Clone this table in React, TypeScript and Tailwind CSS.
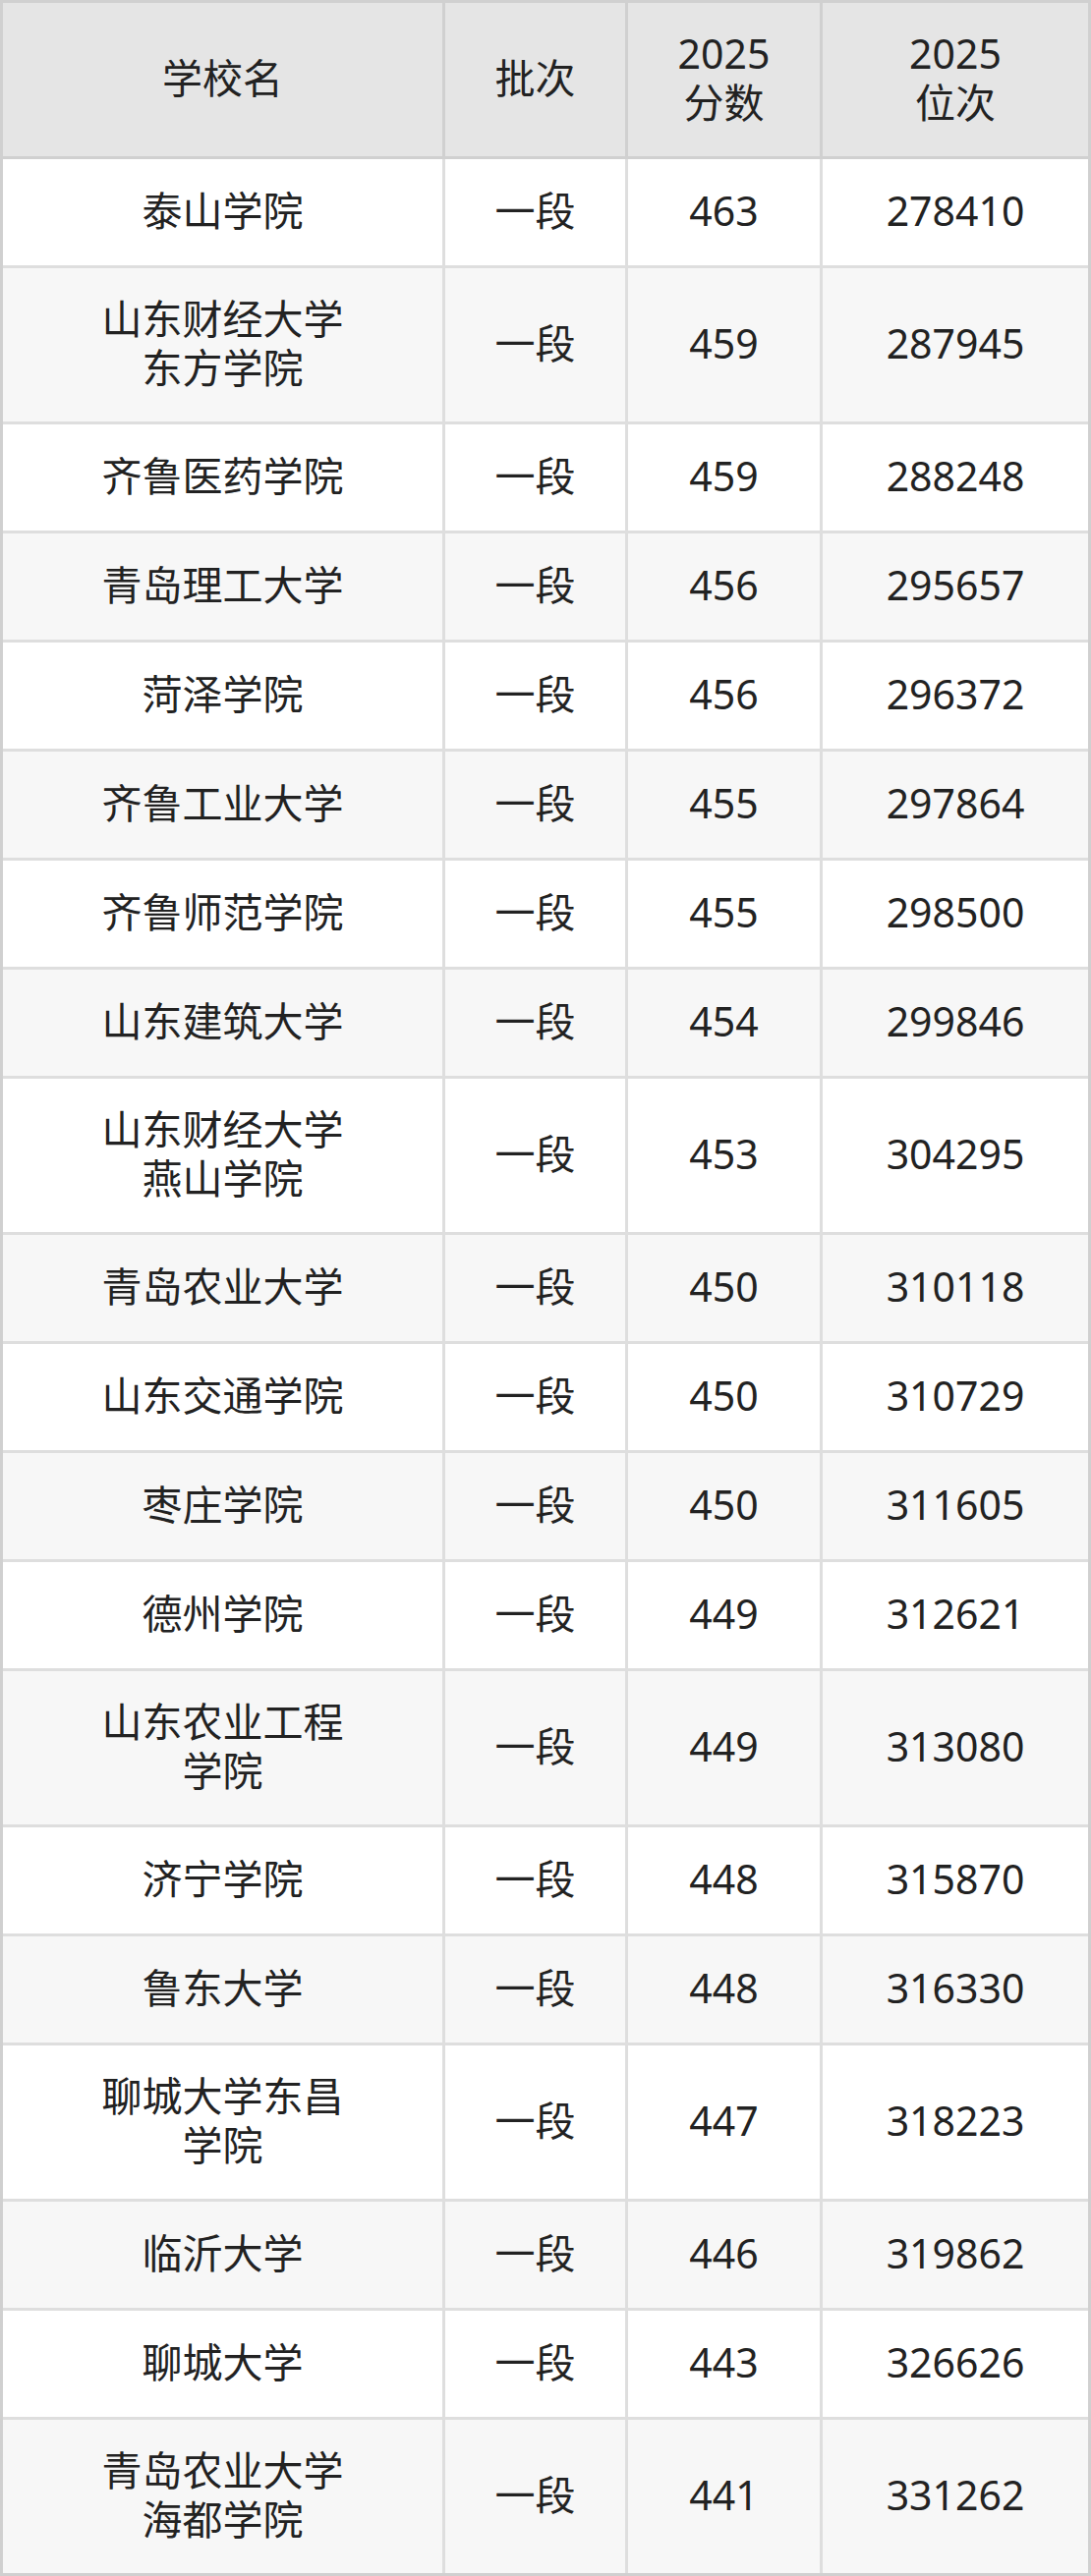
import React from "react";

interface Row {
  name: string[];
  batch: string;
  score: number;
  rank: number;
}

const rows: Row[] = [
  { name: ["泰山学院"], batch: "一段", score: 463, rank: 278410 },
  { name: ["山东财经大学", "东方学院"], batch: "一段", score: 459, rank: 287945 },
  { name: ["齐鲁医药学院"], batch: "一段", score: 459, rank: 288248 },
  { name: ["青岛理工大学"], batch: "一段", score: 456, rank: 295657 },
  { name: ["菏泽学院"], batch: "一段", score: 456, rank: 296372 },
  { name: ["齐鲁工业大学"], batch: "一段", score: 455, rank: 297864 },
  { name: ["齐鲁师范学院"], batch: "一段", score: 455, rank: 298500 },
  { name: ["山东建筑大学"], batch: "一段", score: 454, rank: 299846 },
  { name: ["山东财经大学", "燕山学院"], batch: "一段", score: 453, rank: 304295 },
  { name: ["青岛农业大学"], batch: "一段", score: 450, rank: 310118 },
  { name: ["山东交通学院"], batch: "一段", score: 450, rank: 310729 },
  { name: ["枣庄学院"], batch: "一段", score: 450, rank: 311605 },
  { name: ["德州学院"], batch: "一段", score: 449, rank: 312621 },
  { name: ["山东农业工程", "学院"], batch: "一段", score: 449, rank: 313080 },
  { name: ["济宁学院"], batch: "一段", score: 448, rank: 315870 },
  { name: ["鲁东大学"], batch: "一段", score: 448, rank: 316330 },
  { name: ["聊城大学东昌", "学院"], batch: "一段", score: 447, rank: 318223 },
  { name: ["临沂大学"], batch: "一段", score: 446, rank: 319862 },
  { name: ["聊城大学"], batch: "一段", score: 443, rank: 326626 },
  { name: ["青岛农业大学", "海都学院"], batch: "一段", score: 441, rank: 331262 },
];

const App = () => {
  return (
    <div
      className="w-[1110px] bg-white text-[#222222]"
      style={{ fontFamily: '"Noto Sans", "Noto Sans CJK SC", sans-serif' }}
    >
      <table className="w-full border-separate border-spacing-0 border-[3px] border-[#d0d0d0] text-[41px] leading-[50px] text-center table-fixed">
        <colgroup>
          <col className="w-[450px]" />
          <col className="w-[186px]" />
          <col className="w-[198px]" />
          <col />
        </colgroup>
        {/* Header */}
        <thead>
          <tr className="bg-[#e5e5e5]">
            <th className="h-[159px] font-normal border-r-[3px] border-b-[3px] border-[#d0d0d0] pt-[26px] pb-[30px]">
              学校名
            </th>
            <th className="font-normal border-r-[3px] border-b-[3px] border-[#d0d0d0] pt-[26px] pb-[30px]">
              批次
            </th>
            <th className="font-normal border-r-[3px] border-b-[3px] border-[#d0d0d0] pt-[26px] pb-[30px]">
              2025
              <br />
              分数
            </th>
            <th className="font-normal border-b-[3px] border-[#d0d0d0] pt-[26px] pb-[30px]">
              2025
              <br />
              位次
            </th>
          </tr>
        </thead>
        <tbody>
          {rows.map((row, i) => {
            const last = i === rows.length - 1;
            const bg = i % 2 === 0 ? "bg-white" : "bg-[#f7f7f7]";
            const bottom = last ? "" : "border-b-[3px]";
            // two-line rows get slightly less padding
            const pad = row.name.length > 1 ? "pt-[26px] pb-[30px]" : "pt-[27px] pb-[31px]";
            return (
              <tr key={i} className={bg}>
                <td className={`${pad} border-r-[3px] ${bottom} border-[#dedede]`}>
                  {row.name.map((line, j) => (
                    <div key={j}>{line}</div>
                  ))}
                </td>
                <td className={`${pad} border-r-[3px] ${bottom} border-[#dedede]`}>
                  {row.batch}
                </td>
                <td className={`${pad} border-r-[3px] ${bottom} border-[#dedede]`}>
                  {row.score}
                </td>
                <td className={`${pad} ${bottom} border-[#dedede]`}>{row.rank}</td>
              </tr>
            );
          })}
        </tbody>
      </table>
    </div>
  );
};

export default App;
